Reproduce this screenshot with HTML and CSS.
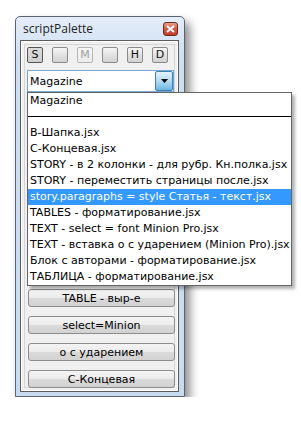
FILE: index.html
```html
<!DOCTYPE html>
<html lang="en">
<head>
    <meta charset="UTF-8">
    <meta name="viewport" content="width=device-width, initial-scale=1.0">
    <title>scriptPalette</title>
    <link rel="stylesheet" href="styles.css">
</head>
<body>
    <div class="window">
        <div class="titlebar">
            <span class="title">scriptPalette</span>
            <span class="close">
                <svg width="9" height="8" viewBox="0 0 9 8">
                    <path d="M1 1 L8 7 M8 1 L1 7" stroke="#fff" stroke-width="2"/>
                </svg>
            </span>
        </div>
        <div class="client">
            <div class="tool-row">
                <button class="tool pressed">S</button>
                <button class="tool"></button>
                <button class="tool disabled">M</button>
                <button class="tool"></button>
                <button class="tool">H</button>
                <button class="tool">D</button>
            </div>

            <div class="combo">
                <div class="combo-field">
                    <span class="combo-value">Magazine</span>
                    <span class="combo-arrow">
                        <svg width="7" height="4" viewBox="0 0 7 4"><path d="M0 0 H7 L3.5 4 Z" fill="#000"/></svg>
                    </span>
                </div>
                <ul class="combo-list">
                    <li>Magazine</li>
                    <li class="separator"></li>
                    <li>B-Шапка.jsx</li>
                    <li>С-Концевая.jsx</li>
                    <li>STORY - в 2 колонки - для рубр. Кн.полка.jsx</li>
                    <li>STORY - переместить страницы после.jsx</li>
                    <li class="selected">story.paragraphs = style Статья - текст.jsx</li>
                    <li>TABLES - форматирование.jsx</li>
                    <li>TEXT - select = font Minion Pro.jsx</li>
                    <li>TEXT - вставка о с ударением (Minion Pro).jsx</li>
                    <li>Блок с авторами - форматирование.jsx</li>
                    <li>ТАБЛИЦА - форматирование.jsx</li>
                </ul>
            </div>

            <div class="actions">
                <!-- these sit under the open dropdown list -->
                <button class="action covered">B-Шапка</button>
                <button class="action covered">STORY - 2 кол.</button>
                <button class="action covered">STORY - стр.</button>
                <button class="action covered">story.paragraphs</button>
                <button class="action covered">TABLES</button>
                <button class="action covered">Блок с авторами</button>
                <button class="action covered">ТАБЛИЦА</button>
                <button class="action">TABLE - выр-е</button>
                <button class="action">select=Minion</button>
                <button class="action">о с ударением</button>
                <button class="action">С-Концевая</button>
            </div>
        </div>
    </div>
</body>
</html>
```

FILE: styles.css
```css
body {
    margin: 0;
    background: #fff;
    font-family: "DejaVu Sans", Tahoma, sans-serif;
}
.window {
    margin: 16px 0 0 15px;
    width: 170px;
    height: 381px;
    box-sizing: border-box;
    border: 1px solid #5a6470;
    border-radius: 5px 5px 0 0;
    background: linear-gradient(#e4edf8, #cfdff1 40px, #c9dbf0);
    box-shadow: 5px 6px 10px rgba(0,0,0,0.45);
    display: flex;
    flex-direction: column;
}
.titlebar {
    height: 23px;
    display: flex;
    align-items: center;
    justify-content: space-between;
    padding: 0 6px 0 7px;
}
.title {
    font-family: "Open Sans", "DejaVu Sans", sans-serif;
    font-size: 12px;
    color: #1e1e1e;
}
.close {
    width: 15px;
    height: 14px;
    margin-top: 1px;
    border: 1px solid #6b2b22;
    border-radius: 3px;
    background: linear-gradient(#e8a08e, #d0573f 50%, #c43c26);
    display: flex;
    align-items: center;
    justify-content: center;
    box-sizing: border-box;
}
.client {
    flex: 1;
    margin: 0 5px 4px 4px;
    border: 1px solid #5c5c5c;
    background: #f0f0f0;
    box-shadow: inset 0 0 0 1px #fff, inset 0 0 0 3px #f0f0f0, inset 0 0 0 4px #d5d5d5;
    padding: 6px 4px 0 6px;
}
.tool-row {
    display: flex;
    gap: 9px;
    height: 16px;
}
.tool {
    width: 16px;
    height: 16px;
    padding: 0;
    margin: 0;
    box-sizing: border-box;
    border: 1px solid #8a8a8a;
    border-radius: 2px;
    background: linear-gradient(#f6f6f6, #e2e2e2 50%, #d2d2d2);
    font-family: "DejaVu Sans", Tahoma, sans-serif;
    font-size: 11px;
    line-height: 14px;
    color: #111;
}
.tool.pressed {
    border-color: #555;
    background: linear-gradient(#dcdcdc, #cfcfcf);
}
.tool.disabled {
    color: #a0a0a0;
    border-color: #b5b5b5;
    background: linear-gradient(#f7f7f7, #ececec);
}
.combo {
    position: relative;
    margin-top: 7px;
    width: 147px;
}
.combo-field {
    height: 22px;
    box-sizing: border-box;
    border: 1px solid #7aa6d4;
    background: #fff;
    display: flex;
    align-items: center;
    justify-content: space-between;
}
.combo-value {
    font-size: 11px;
    padding-left: 2px;
    color: #000;
}
.combo-arrow {
    width: 18px;
    height: 20px;
    box-sizing: border-box;
    border: 1px solid #3c7fb1;
    border-radius: 2px;
    background: linear-gradient(#e2f2fc, #b3dcf5 50%, #6fb5e3);
    display: flex;
    align-items: center;
    justify-content: center;
}
.combo-list {
    position: absolute;
    top: 22px;
    left: 0;
    width: 263px;
    margin: 0;
    padding: 0;
    list-style: none;
    background: #fff;
    border: 1px solid #646464;
    box-shadow: 3px 3px 3px rgba(0,0,0,0.3);
    z-index: 2;
    font-size: 11px;
}
.combo-list li {
    height: 16px;
    line-height: 16px;
    padding-left: 2px;
    white-space: nowrap;
    color: #000;
}
.combo-list li.separator {
    position: relative;
}
.combo-list li.separator::after {
    content: "";
    position: absolute;
    left: 0;
    right: 0;
    top: 7px;
    border-top: 1px solid #000;
}
.combo-list li.selected {
    background: #3399ff;
    color: #fff;
}
.actions {
    margin-top: 8px;
    display: flex;
    flex-direction: column;
    gap: 9px;
}
.action {
    width: 147px;
    height: 18px;
    margin: 0 0 0 1px;
    padding: 0;
    box-sizing: border-box;
    border: 1px solid #8c8c8c;
    border-radius: 3px;
    background: linear-gradient(#f4f4f4, #ebebeb 50%, #dadada 51%, #d2d2d2);
    font-family: "DejaVu Sans", Tahoma, sans-serif;
    font-size: 11px;
    color: #000;
}
.action.covered {
    visibility: hidden;
}
```
